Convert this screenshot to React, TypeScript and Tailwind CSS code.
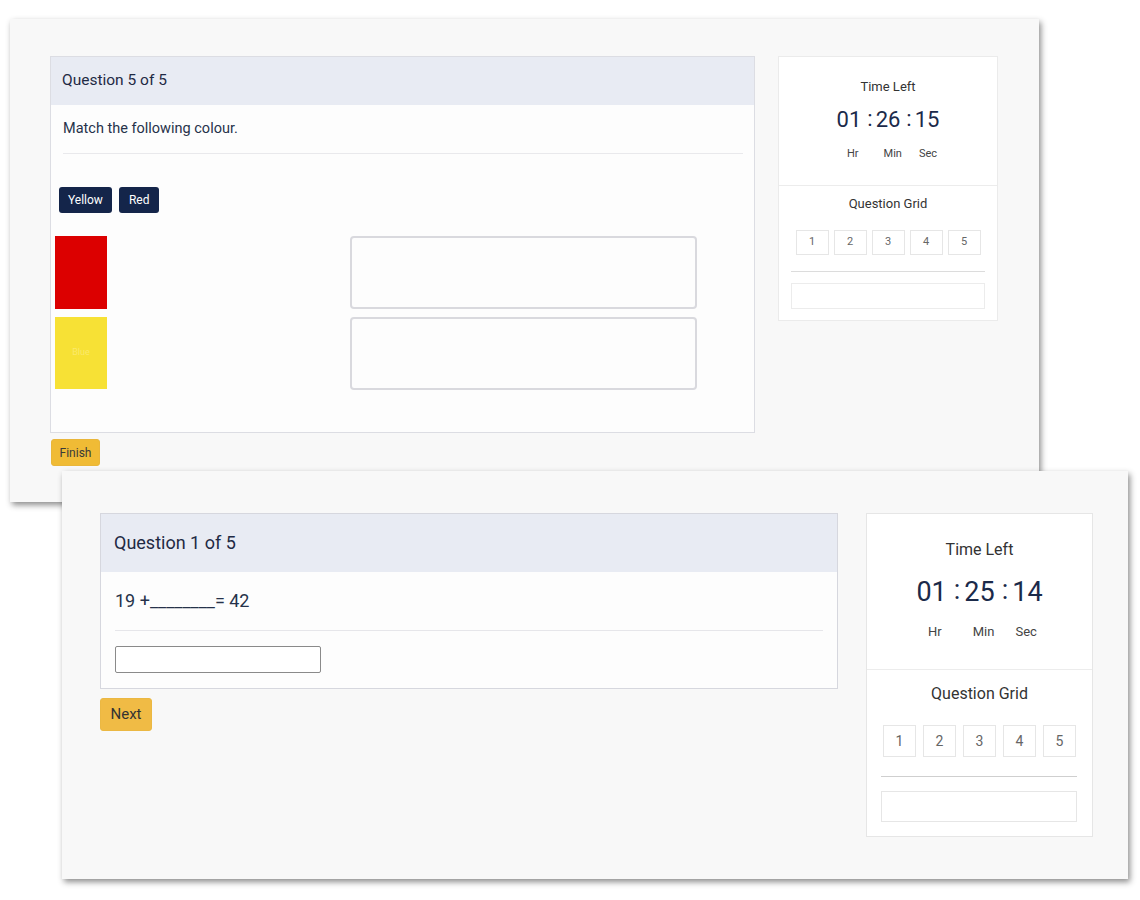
const font = "font-['Roboto','Liberation_Sans',sans-serif]";

function GridButtons({ size }: { size: 'sm' | 'lg' }) {
  const cls =
    size === 'sm'
      ? 'h-[25px] w-[33px] text-[11px]'
      : 'h-[32px] w-[33px] text-[14px]';
  return (
    <div className={`flex justify-center ${size === 'sm' ? 'gap-[5px]' : 'gap-[7px]'}`}>
      {[1, 2, 3, 4, 5].map((n) => (
        <div
          key={n}
          className={`${cls} flex items-center justify-center border border-[#e6e6e6] bg-white text-[#666]`}
        >
          {n}
        </div>
      ))}
    </div>
  );
}

function Timer({ time, size }: { time: [string, string, string]; size: 'sm' | 'lg' }) {
  const sm = size === 'sm';
  const colon = sm ? 'ml-[6px] mr-[3px] -translate-y-[1px]' : 'ml-[7px] mr-[4px] -translate-y-[2px]';
  return (
    <div className="flex flex-col items-center">
      <div
        className={`flex items-center text-[#1b2a4a] ${
          sm ? 'text-[22px] leading-[26px] mt-[12px]' : 'text-[27px] leading-[32px] mt-[16px]'
        }`}
      >
        <span>{time[0]}</span>
        <span className={colon}>:</span>
        <span>{time[1]}</span>
        <span className={colon}>:</span>
        <span>{time[2]}</span>
      </div>
      <div
        className={`flex text-[#444] ${
          sm ? 'text-[11px] leading-[14px] mt-[14px] pl-[8px]' : 'text-[13px] leading-[16px] mt-[16px] pl-[6px]'
        }`}
      >
        <span>Hr</span>
        <span className={sm ? 'ml-[25px]' : 'ml-[31px]'}>Min</span>
        <span className={sm ? 'ml-[17px]' : 'ml-[21px]'}>Sec</span>
      </div>
    </div>
  );
}

function FirstWindow() {
  return (
    <div className="absolute left-[10px] top-[19px] w-[1029px] h-[483px] bg-[#f8f8f8] shadow-[2px_3px_6px_rgba(0,0,0,0.45)]">
      <div className="flex pt-[37px] pl-[40px] gap-[23px]">
        {/* question */}
        <div className="w-[705px]">
          <div className="border border-[#dcdde3] bg-[#fdfdfd]">
            <div className="h-[48px] bg-[#e8ebf3] px-[11px] flex items-center text-[15.5px] text-[#1f2a44]">
              Question 5 of 5
            </div>
            <div className="pl-[12px] pr-[11px]">
              <div className="pt-[14px] pb-[14px] text-[14.5px] leading-[20px] text-[#26324a]">
                Match the following colour.
              </div>
              <div className="border-t border-[#e9e9ec]" />
            </div>
            <div className="flex gap-[7px] pl-[8px] mt-[33px]">
              <button className="h-[26px] px-[9px] rounded-[3px] bg-[#14254a] text-white text-[12px]">Yellow</button>
              <button className="h-[26px] px-[10px] rounded-[3px] bg-[#14254a] text-white text-[12px]">Red</button>
            </div>
            <div className="flex flex-col gap-[8px] pl-[4px] mt-[23px] pb-[42px]">
              <div className="flex">
                <div className="w-[52px] h-[73px] bg-[#dc0000]" />
                <div className="ml-[243px] w-[347px] h-[73px] rounded-[4px] border-2 border-[#d9d9de] bg-[#fdfdfd]" />
              </div>
              <div className="flex">
                <div className="w-[52px] h-[72px] bg-[#f7e135] flex items-center justify-center text-[9px] text-[#fbe96a]">Blue</div>
                <div className="ml-[243px] w-[347px] h-[73px] rounded-[4px] border-2 border-[#d9d9de] bg-[#fdfdfd]" />
              </div>
            </div>
          </div>
          <button className="mt-[6px] ml-px h-[27px] w-[49px] rounded-[3px] bg-[#f0bb35] border border-[#e9b63a] text-[12px] text-[#3a3a3a]">
            Finish
          </button>
        </div>

        {/* sidebar */}
        <div className="w-[220px] h-[265px] bg-white border border-[#ebebeb] flex flex-col">
          <div className="flex flex-col items-center pt-[22px] pb-[24px] border-b border-[#ececec]">
            <div className="text-[13px] leading-[16px] text-[#333]">Time Left</div>
            <Timer time={['01', '26', '15']} size="sm" />
          </div>
          <div className="flex flex-col pt-[10px]">
            <div className="text-center text-[13px] leading-[16px] text-[#333]">Question Grid</div>
            <div className="mt-[18px]">
              <GridButtons size="sm" />
            </div>
            <div className="mx-[12px] mt-[16px] border-t border-[#dcdcdc]" />
            <div className="mx-[12px] mt-[11px] h-[26px] border border-[#ececec]" />
          </div>
        </div>
      </div>
    </div>
  );
}

function SecondWindow() {
  return (
    <div className="absolute left-[62px] top-[471px] w-[1066px] h-[408px] bg-[#f8f8f8] shadow-[2px_3px_6px_rgba(0,0,0,0.45)]">
      <div className="flex pt-[42px] pl-[38px] gap-[28px]">
        <div className="w-[738px]">
          <div className="border border-[#d6d7de] bg-[#fdfdfd]">
            <div className="h-[58px] bg-[#e8ebf3] px-[13px] flex items-center text-[18px] text-[#1f2a44]">
              <span className="-translate-y-[1px]">Question 1 of 5</span>
            </div>
            <div className="pl-[14px] pr-[14px]">
              <div className="pt-[17px] pb-[17px] text-[18px] leading-[24px] text-[#26324a]">
                19 +________= 42
              </div>
              <div className="border-t border-[#e6e6ea]" />
              <input
                className="mt-[15px] mb-[15px] block w-[206px] h-[27px] border border-[#8a8a8a] rounded-[2px] bg-white"
                readOnly
              />
            </div>
          </div>
          <button className="mt-[9px] h-[33px] w-[52px] rounded-[3px] bg-[#f0bb45] border border-[#ebb843] text-[15px] text-[#333]">
            Next
          </button>
        </div>

        <div className="w-[227px] h-[324px] bg-white border border-[#e6e6e6] flex flex-col">
          <div className="flex flex-col items-center pt-[26px] pb-[29px] border-b border-[#ececec]">
            <div className="text-[16px] leading-[20px] text-[#333]">Time Left</div>
            <Timer time={['01', '25', '14']} size="lg" />
          </div>
          <div className="flex flex-col pt-[14px]">
            <div className="text-center text-[16px] leading-[20px] text-[#333]">Question Grid</div>
            <div className="mt-[21px]">
              <GridButtons size="lg" />
            </div>
            <div className="ml-[14px] mr-[15px] mt-[19px] border-t border-[#cfcfcf]" />
            <div className="ml-[14px] mr-[15px] mt-[14px] h-[31px] border border-[#e6e6e6]" />
          </div>
        </div>
      </div>
    </div>
  );
}

export default function App() {
  return (
    <div className={`relative w-[1140px] h-[900px] bg-white overflow-hidden ${font}`}>
      <FirstWindow />
      <SecondWindow />
    </div>
  );
}
